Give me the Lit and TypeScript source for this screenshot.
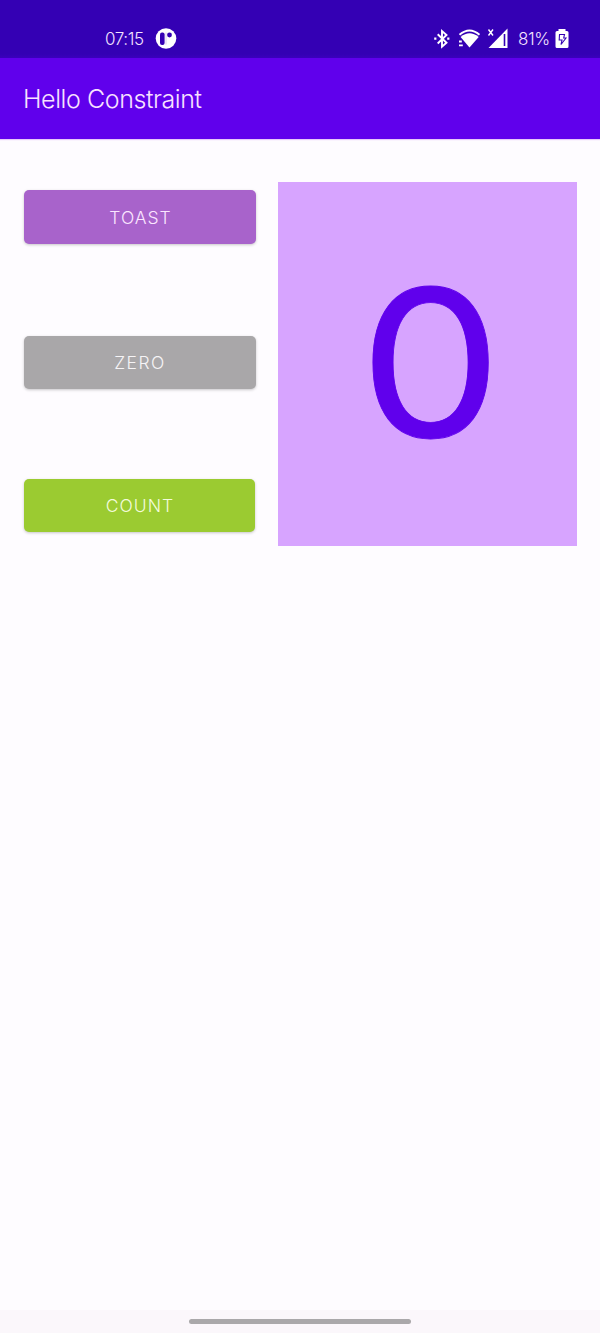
import { LitElement, html, css } from "lit";
import { customElement, state } from "lit/decorators.js";

@customElement("app-root")
export class AppRoot extends LitElement {
  @state() private count = 0;

  static styles = css`
    :host {
      display: flex;
      flex-direction: column;
      height: 1333px;
      background: #fefcff;
      font-family: Inter, "Liberation Sans", sans-serif;
      font-weight: 300;
    }
    .status {
      box-sizing: border-box;
      height: 58px;
      padding: 20px 31px 0 105px;
      display: flex;
      align-items: flex-start;
      background: linear-gradient(#3400b4 0 54px, #3b00bd 58px);
      color: #f3e2ff;
      font-size: 17px;
      line-height: 39px;
      letter-spacing: -0.4px;
    }
    .status svg {
      display: block;
      flex: none;
    }
    .time { width: 50px; }
    .spacer { flex: 1; }
    .battery { width: 37px; }
    .signals { margin-right: 3px; }
    .bar {
      box-sizing: border-box;
      height: 81px;
      padding-left: 23px;
      background: #6000ec;
      color: #f8e2ff;
      font-size: 25px;
      line-height: 82px;
      letter-spacing: -0.42px;
      box-shadow: 0 1px 1px #e6c9fa;
    }
    .content {
      flex: 1;
      display: flex;
      align-items: flex-start;
      padding: 43px 24px 0 24px;
      gap: 22px;
    }
    .buttons {
      width: 232px;
      padding-top: 8px;
      display: flex;
      flex-direction: column;
    }
    button {
      height: 53px;
      width: 232px;
      padding: 0;
      border: 0;
      border-radius: 5px;
      font: inherit;
      font-size: 17.5px;
      letter-spacing: 1px;
      color: #fbe6ff;
      box-shadow: 0 1px 3px #00000038;
    }
    .toast { background: #a863cb; height: 54px; padding-left: 1px; }
    .zero { background: #a9a7a9; margin-top: 92px; color: #f6f4f6; letter-spacing: 1.5px; }
    .count { background: #9bcb31; margin-top: 90px; width: 231px; color: #f3fbdc; padding-left: 1px; }
    .panel {
      width: 299px;
      height: 364px;
      flex: none;
      display: flex;
      align-items: center;
      justify-content: center;
      background: #d7a4ff;
      color: #6000ec;
    }
    .value {
      font-size: 205px;
      font-weight: 400;
      line-height: 1;
      -webkit-text-stroke: 0.8px #6000ec;
      transform: translate(3px, -2px) scaleX(1.1);
    }
    .nav {
      height: 23px;
      background: #fbf7fb;
      display: flex;
      align-items: center;
      justify-content: center;
    }
    .handle {
      width: 222px;
      height: 5px;
      border-radius: 3px;
      background: #aaa8aa;
    }
  `;

  render() {
    return html`
      <div class="status">
        <span class="time">07:15</span>
        <svg width="22" height="38" viewBox="0 0 22 38">
          <circle cx="11" cy="18.500" r="10.300" fill="#fff" />
          <rect x="5" y="12.500" width="4.600" height="12.500" rx="2" fill="#3400b4" />
          <path d="M11 12.500v12" stroke="#3400b4" stroke-width=".6" opacity=".3" />
          <circle cx="14.500" cy="15" r="2.400" fill="#3400b4" />
        </svg>
        <span class="spacer"></span>
        <svg class="signals" width="84" height="38" viewBox="0 0 84 38" fill="none" stroke="#fff">
          <path d="M6.700 14.200l8.800 8.500-4.500 4V11l4.500 4-8.800 8.500" stroke-width="1.900" />
          <path d="M3.200 18.700h2.200M16.200 18.700h2.200" stroke-width="2.200" />
          <path d="M28.500 14.800Q38.500 6.200 48.500 14.800" stroke-width="2" />
          <path d="M29.600 17Q38.500 9.500 47.700 17L38.500 27.500z" fill="#fff" stroke="none" />
          <path d="M28 21.500h2.800M28 25.300h3.800" stroke-width="1.800" />
          <path d="M57.500 9.500l4.500 6M62 9.500l-4.500 6" stroke-width="1.400" />
          <path d="M57.500 28L76.500 8.500V28z" fill="#fff" stroke="none" />
          <path d="M73.500 14v12" stroke="#3400b4" stroke-width="1.600" />
        </svg>
        <span class="battery">81%</span>
        <svg width="14" height="38" viewBox="0 0 14 38">
          <path d="M3.500 9h7v2H12q1.500 0 1.500 1.500v14Q13.500 28 12 28H2Q.5 28 .5 26.500v-14Q.5 11 2 11h1.500z" fill="#fff" />
          <path d="M4.500 14.500h5L8.700 18H11l-5 6.500 1-4.500H4.200z" fill="none" stroke="#3400b4" stroke-width="1.100" />
        </svg>
      </div>
      <div class="bar">Hello Constraint</div>
      <div class="content">
        <div class="buttons">
          <button class="toast">TOAST</button>
          <button class="zero" @click=${() => (this.count = 0)}>ZERO</button>
          <button class="count" @click=${() => this.count++}>COUNT</button>
        </div>
        <div class="panel"><span class="value">${this.count}</span></div>
      </div>
      <div class="nav"><div class="handle"></div></div>
    `;
  }
}
